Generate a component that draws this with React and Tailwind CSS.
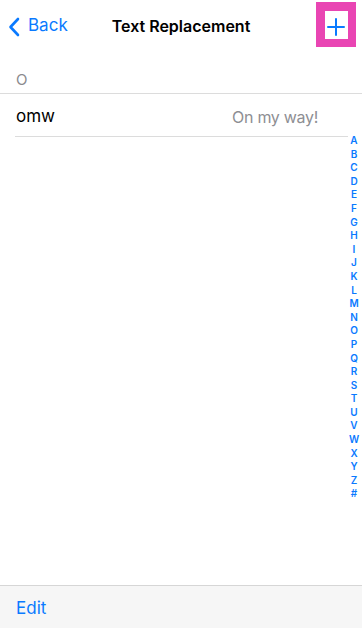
const letters = 'ABCDEFGHIJKLMNOPQRSTUVWXYZ#'.split('');

export default function App() {
  return (
    <div
      className="relative flex h-[628px] w-[362px] flex-col bg-white"
      style={{ fontFamily: 'Inter, "Liberation Sans", sans-serif' }}
    >
      <header className="relative flex h-[50px] items-center pt-[1px]">
        <button className="flex items-center pl-[8px] text-[#0a7aff]">
          <svg className="mt-[2px]" width="12" height="20" viewBox="0 0 12 20" fill="none">
            <path d="M10 2L2.5 10L10 18" stroke="currentColor" strokeWidth="2.6" strokeLinecap="round" strokeLinejoin="round" />
          </svg>
          <span className="ml-[8px] text-[17px] leading-none">Back</span>
        </button>
        <h1 className="absolute left-1/2 -translate-x-1/2 text-[16px] font-semibold text-black">Text Replacement</h1>
        <div className="absolute right-[6px] top-[2px] flex h-[45px] w-[40px] items-center justify-center bg-[#e945b3]">
          <div className="flex h-[28px] w-[23px] items-center justify-center bg-white">
            <svg className="mt-[4px]" width="18" height="18" viewBox="0 0 18 18">
              <path d="M9 1V17M1 9H17" stroke="#0a7aff" strokeWidth="2" strokeLinecap="round" />
            </svg>
          </div>
        </div>
      </header>

      <main className="flex-1">
        <div className="mt-[10px] flex h-[34px] items-center border-b border-[#dcdcdc] pl-[16px] pt-[8px] text-[15px] text-[#8a8a8e]">
          O
        </div>
        <div className="ml-[15px] mr-[14px] flex h-[43px] items-center justify-between border-b border-[#dcdcdc] pl-[1px] pr-[30px] pt-[3px]">
          <span className="text-[17px] text-black">omw</span>
          <span className="text-[16px] tracking-[-0.3px] text-[#8e8e93]">On my way!</span>
        </div>
      </main>

      <nav className="absolute right-0 top-[134px] flex w-[16px] flex-col items-center">
        {letters.map((l) => (
          <span key={l} className="text-[10px] font-semibold leading-[13.6px] text-[#0a7aff]">
            {l}
          </span>
        ))}
      </nav>

      <footer className="flex h-[43px] items-center border-t border-[#d6d6d6] bg-[#f6f6f6] pl-[16px] pt-[3px]">
        <span className="text-[17px] text-[#0a7aff]">Edit</span>
      </footer>
    </div>
  );
}
